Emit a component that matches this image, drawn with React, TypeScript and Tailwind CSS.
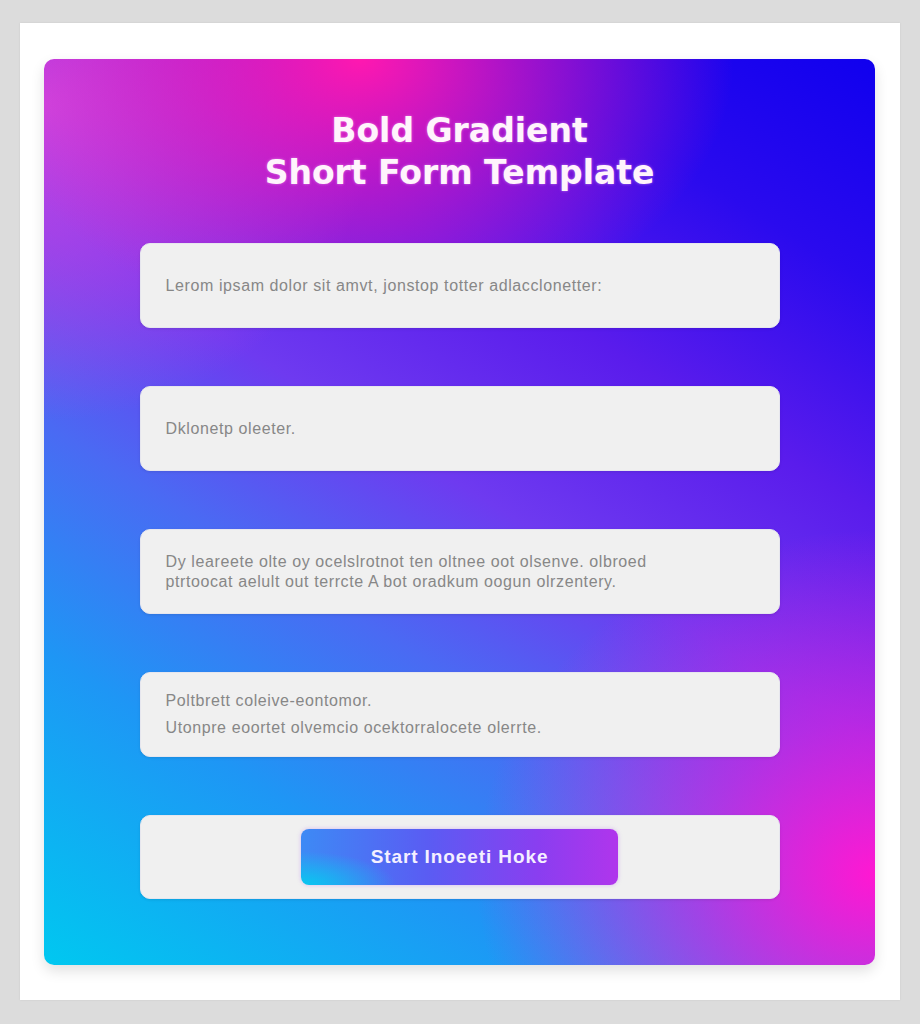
export default function App() {
  const fields = [
    { lines: ['Lerom ipsam dolor sit amvt, jonstop totter adlacclonetter:'], gap: '' },
    { lines: ['Dklonetp oleeter.'], gap: '' },
    {
      lines: [
        'Dy leareete olte oy ocelslrotnot ten oltnee oot olsenve. olbroed',
        'ptrtoocat aelult out terrcte A bot oradkum oogun olrzentery.',
      ],
      gap: 'gap-0',
    },
    {
      lines: ['Poltbrett coleive-eontomor.', 'Utonpre eoortet olvemcio ocektorralocete olerrte.'],
      gap: 'gap-[7px]',
    },
  ];

  return (
    <div className="min-h-screen w-full bg-[#dcdcdc] pt-[23px] pb-[24px] px-[20px] font-['Liberation_Sans',sans-serif]">
      <div className="bg-white h-[977px] pt-[36px] pl-[24px] pr-[25px] pb-[35px] shadow-[0_0_2px_rgba(0,0,0,0.08)]">
        <div className="h-full rounded-[10px] overflow-hidden shadow-[0_6px_14px_rgba(0,0,0,0.12)] bg-[radial-gradient(ellipse_45%_30%_at_38%_0%,#ff18b0_0%,rgba(255,24,176,0.6)_40%,transparent_100%),radial-gradient(ellipse_40%_35%_at_0%_5%,#c848e2_0%,transparent_100%),radial-gradient(ellipse_48%_38%_at_100%_90%,#ff18d2_0%,rgba(230,30,220,0.6)_45%,transparent_100%),linear-gradient(32deg,#00c8f0_0%,#1e96f5_22%,#4a6af3_38%,#6e3af0_52%,#5a1cec_68%,#2a0aee_84%,#1000ee_100%)] flex flex-col items-center pt-[51px] pb-[67px]">
          <h1 className="text-center text-[#fff4fc] font-['DejaVu_Sans',sans-serif] font-bold text-[33px] leading-[42px] tracking-[0px] [text-shadow:0_0_3px_rgba(255,200,255,0.5)]">
            Bold Gradient
            <br />
            Short Form Template
          </h1>

          <div className="mt-[49px] w-[640px] flex flex-col gap-[58px]">
            {fields.map((f, i) => (
              <div
                key={i}
                className={`h-[85px] rounded-[10px] bg-[#f0f0f0] border border-[#e6e6ee] shadow-[0_1px_3px_rgba(0,0,0,0.1)] flex flex-col justify-center px-[25px] ${f.gap}`}
              >
                {f.lines.map((l, j) => (
                  <p key={j} className="text-[16px] leading-[20px] text-[#878787] tracking-[0.6px] whitespace-nowrap">
                    {l}
                  </p>
                ))}
              </div>
            ))}

            <div className="h-[84px] rounded-[10px] bg-[#f0f0f0] border border-[#e6e6ee] shadow-[0_1px_3px_rgba(0,0,0,0.1)] flex items-center justify-center">
              <button className="w-[317px] h-[56px] rounded-[8px] bg-[radial-gradient(ellipse_30%_60%_at_0%_100%,#08c8f0_0%,transparent_100%),linear-gradient(90deg,#3d8af5_0%,#5a5cf3_40%,#8a3ef0_75%,#b035ec_100%)] text-[#f4f0ff] font-bold text-[19px] tracking-[0.9px] shadow-[0_0_4px_rgba(160,80,240,0.35)]">
                Start Inoeeti Hoke
              </button>
            </div>
          </div>
        </div>
      </div>
    </div>
  );
}
